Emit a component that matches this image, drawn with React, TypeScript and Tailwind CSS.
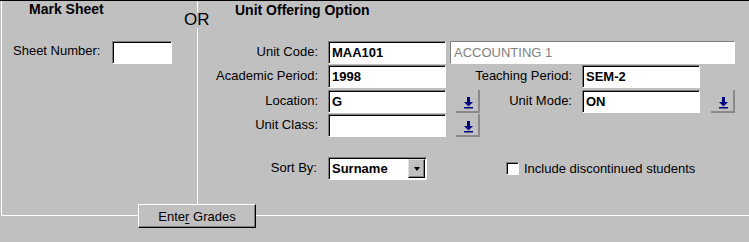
import clsx from "clsx";

const sunken =
  "border border-t-[#808080] border-l-[#808080] border-b-white border-r-white shadow-[inset_1px_1px_0_#000]";

function Field({
  value,
  width,
  muted,
}: {
  value?: string;
  width: string;
  muted?: boolean;
}) {
  return (
    <div
      className={clsx(
        "flex h-[23px] shrink-0 items-center bg-white pl-[3px] text-[13px] leading-none",
        width,
        muted
          ? "border border-t-[#808080] border-l-[#808080] border-b-white border-r-white font-normal text-[#808080]"
          : clsx(sunken, "font-bold text-black"),
      )}
    >
      {value}
    </div>
  );
}

function Label({ text, width }: { text: string; width: string }) {
  return (
    <div
      className={clsx(
        "shrink-0 pb-[3px] text-right text-[13px] leading-none text-black",
        width,
      )}
    >
      {text}
    </div>
  );
}

function ArrowButton() {
  return (
    <button
      type="button"
      className="flex h-[23px] w-[24px] shrink-0 items-end justify-center border-r-2 border-b-2 border-[#8a8a8a] pb-[2px] pl-[2px]"
    >
      <svg width="9" height="12" viewBox="0 0 9 12">
        <rect x="3" y="0" width="3" height="5" fill="#000080" />
        <polygon points="0,5 9,5 4.5,9.5" fill="#000080" />
        <rect x="0" y="10" width="9" height="1.5" fill="#000080" />
      </svg>
    </button>
  );
}

export default function App() {
  return (
    <div className="relative h-[242px] w-full overflow-hidden border-t border-black bg-[#c0c0c0] pl-[1px] font-['Liberation_Sans',Arial,sans-serif] text-black">
      <div className="flex h-[215px] border-b border-l border-white">
        {/* mark sheet */}
        <section className="flex w-[196px] shrink-0 flex-col border-r border-white">
          <h2 className="pl-[27px] text-[14px] font-bold leading-[16px]">
            Mark Sheet
          </h2>
          <div className="mt-[24px] flex items-center">
            <div className="w-[110px] pb-[4px] pl-[11px] text-[13px] leading-none">
              Sheet Number:
            </div>
            <Field width="w-[60px]" />
          </div>
        </section>

        {/* unit offering */}
        <section className="flex flex-1 flex-col">
          <h2 className="pl-[37px] pt-[1px] text-[14px] font-bold leading-[16px]">
            Unit Offering Option
          </h2>

          <div className="mt-[23px] flex items-center">
            <Label text="Unit Code:" width="w-[120px]" />
            <div className="ml-[10px] flex gap-[4px]">
              <Field value="MAA101" width="w-[118px]" />
              <Field value="ACCOUNTING 1" width="w-[285px]" muted />
            </div>
          </div>

          <div className="mt-[1px] flex items-center">
            <Label text="Academic Period:" width="w-[120px]" />
            <div className="ml-[10px]">
              <Field value="1998" width="w-[118px]" />
            </div>
            <Label text="Teaching Period:" width="w-[126px]" />
            <div className="ml-[10px]">
              <Field value="SEM-2" width="w-[118px]" />
            </div>
          </div>

          <div className="mt-[2px] flex items-center">
            <Label text="Location:" width="w-[120px]" />
            <div className="ml-[10px] flex gap-[10px]">
              <Field value="G" width="w-[118px]" />
              <ArrowButton />
            </div>
            <Label text="Unit Mode:" width="w-[92px]" />
            <div className="ml-[10px] flex gap-[11px]">
              <Field value="ON" width="w-[118px]" />
              <ArrowButton />
            </div>
          </div>

          <div className="mt-[1px] flex items-center">
            <Label text="Unit Class:" width="w-[120px]" />
            <div className="ml-[10px] flex gap-[10px]">
              <Field width="w-[118px]" />
              <ArrowButton />
            </div>
          </div>

          <div className="mt-[20px] flex items-center">
            <Label text="Sort By:" width="w-[119px]" />
            <div
              className={clsx(
                "ml-[11px] flex h-[23px] w-[99px] items-center justify-between bg-white pl-[3px] pr-[1px] text-[13px] font-bold leading-none",
                sunken,
              )}
            >
              <span>Surname</span>
              <span className="flex h-[19px] w-[17px] items-center justify-center border border-t-[#dfdfdf] border-l-[#dfdfdf] border-r-black border-b-black bg-[#c0c0c0] shadow-[inset_-1px_-1px_0_#808080]">
                <span className="h-0 w-0 border-x-[3.5px] border-t-[4px] border-x-transparent border-t-black" />
              </span>
            </div>
            <label className="ml-[79px] flex items-center gap-[5px] text-[13px] leading-none">
              <span className={clsx("h-[13px] w-[13px] bg-white", sunken)} />
              Include discontinued students
            </label>
          </div>
        </section>
      </div>

      {/* overlays */}
      <div className="absolute left-[184px] top-[11px] bg-[#c0c0c0] text-[17px] leading-[16px]">
        OR
      </div>
      <button
        type="button"
        className="absolute left-[138px] top-[203px] flex h-[24px] w-[118px] items-center justify-center border border-t-white border-l-white border-r-black border-b-black bg-[#c0c0c0] text-[13px] leading-none shadow-[inset_-1px_-1px_0_#808080]"
      >
        Ente<span className="underline underline-offset-2">r</span>&nbsp;Grades
      </button>
    </div>
  );
}
